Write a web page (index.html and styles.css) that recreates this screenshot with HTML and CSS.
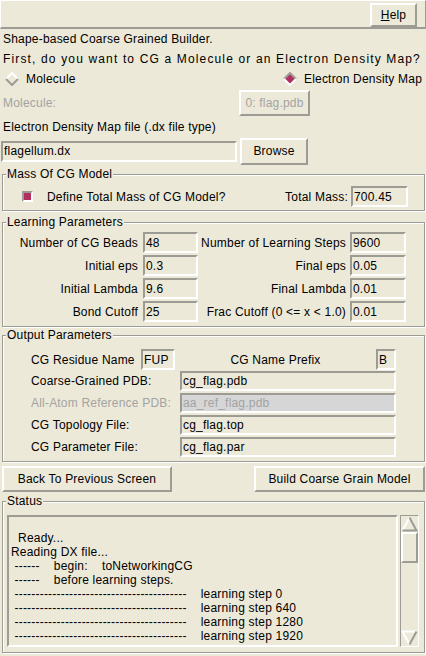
FILE: index.html
```html
<!DOCTYPE html>
<html>
<head>
<meta charset="utf-8">
<link rel="stylesheet" href="styles.css">
</head>
<body>
<div class="menubar"><div class="menubtn"><u>H</u>elp</div></div>
<div class="msg">Shape-based Coarse Grained Builder.</div>
<div class="msg wide">First, do you want to CG a Molecule or an Electron Density Map?</div>
<div class="radios">
  <div class="radio">
    <svg width="14" height="14" viewBox="0 0 14 14"><polygon points="7,1 13,7 7,13 1,7" fill="#ece9d8"/><polyline points="1,7 7,1 13,7" fill="none" stroke="#ffffff" stroke-width="2"/><polyline points="1,7 7,13 13,7" fill="none" stroke="#9c9b94" stroke-width="2"/></svg>
    <span>Molecule</span>
  </div>
  <div class="radio">
    <svg width="14" height="14" viewBox="0 0 14 14"><polygon points="7,1 13,7 7,13 1,7" fill="#b03060"/><polyline points="1,7 7,1 13,7" fill="none" stroke="#9c9b94" stroke-width="2"/><polyline points="1,7 7,13 13,7" fill="none" stroke="#ffffff" stroke-width="2"/></svg>
    <span>Electron Density Map</span>
  </div>
</div>
<div class="molrow">
  <span class="mollabel dis">Molecule:</span>
  <div class="btn molbtn dis">0: flag.pdb</div>
</div>
<div class="msg">Electron Density Map file (.dx file type)</div>
<div class="filerow">
  <div class="entry fileentry">flagellum.dx</div>
  <div class="btn browse">Browse</div>
</div>

<div class="group mass">
  <div class="legend">Mass Of CG Model</div>
  <div class="massrow">
    <div class="check"></div>
    <span class="checklabel">Define Total Mass of CG Model?</span>
    <span class="tm">Total Mass:</span>
    <div class="entry tmentry">700.45</div>
  </div>
</div>

<div class="group learn">
  <div class="legend">Learning Parameters</div>
  <div class="lgrid">
    <div class="lab">Number of CG Beads</div><div class="entry">48</div>
    <div class="lab r">Number of Learning Steps</div><div class="entry">9600</div>
    <div class="lab">Initial eps</div><div class="entry">0.3</div>
    <div class="lab r">Final eps</div><div class="entry">0.05</div>
    <div class="lab">Initial Lambda</div><div class="entry">9.6</div>
    <div class="lab r">Final Lambda</div><div class="entry">0.01</div>
    <div class="lab">Bond Cutoff</div><div class="entry">25</div>
    <div class="lab r">Frac Cutoff (0 &lt;= x &lt; 1.0)</div><div class="entry">0.01</div>
  </div>
</div>

<div class="group output">
  <div class="legend">Output Parameters</div>
  <div class="orow1">
    <span class="olab1">CG Residue Name</span>
    <div class="entry fup">FUP</div>
    <span class="prefix">CG Name Prefix</span>
    <div class="entry bent">B</div>
  </div>
  <div class="orow"><span class="olab">Coarse-Grained PDB:</span><div class="entry oent">cg_flag.pdb</div></div>
  <div class="orow"><span class="olab dis">All-Atom Reference PDB:</span><div class="entry oent disent">aa_ref_flag.pdb</div></div>
  <div class="orow"><span class="olab">CG Topology File:</span><div class="entry oent">cg_flag.top</div></div>
  <div class="orow"><span class="olab">CG Parameter File:</span><div class="entry oent">cg_flag.par</div></div>
</div>

<div class="btnrow">
  <div class="btn back">Back To Previous Screen</div>
  <div class="btn build">Build Coarse Grain Model</div>
</div>

<div class="group status">
  <div class="legend">Status</div>
  <div class="statusbody">
    <div class="text">
<div class="ln"> </div><div class="ln">  Ready...</div><div class="ln">Reading DX file...</div><div class="ln"> ------    begin:    toNetworkingCG</div><div class="ln"> ------    before learning steps.</div><div class="ln"> -----------------------------------------    learning step 0</div><div class="ln"> -----------------------------------------    learning step 640</div><div class="ln"> -----------------------------------------    learning step 1280</div><div class="ln"> -----------------------------------------    learning step 1920</div>
    </div>
    <div class="scroll">
      <svg class="arrow" width="17" height="16" viewBox="0 0 17 16"><polyline points="1.5,14.5 8.5,1.5" fill="none" stroke="#ffffff" stroke-width="2"/><polyline points="8.5,1.5 15.5,14.5 1.5,14.5" fill="none" stroke="#9c9b94" stroke-width="2"/></svg>
      <div class="slider"></div>
      <div class="trough"></div>
      <svg class="arrow" width="17" height="16" viewBox="0 0 17 16"><polyline points="15.5,1.5 1.5,1.5 8.5,14.5" fill="none" stroke="#ffffff" stroke-width="2"/><polyline points="8.5,14.5 15.5,1.5" fill="none" stroke="#9c9b94" stroke-width="2"/></svg>
    </div>
  </div>
</div>
</body>
</html>
```
FILE: styles.css
```css
* { box-sizing: border-box; }
html, body { margin: 0; padding: 0; }
body {
  width: 426px;
  height: 656px;
  background: #ece9d8;
  font-family: "Liberation Sans", Arial, sans-serif;
  font-size: 12px;
  letter-spacing: 0.2px;
  color: #000;
  overflow: hidden;
}
.dis { color: #a3a3a3; }

.menubar {
  height: 29px;
  border-top: 1px solid #fff;
  border-left: 1px solid #fff;
  border-bottom: 2px solid #9c9b94;
  border-right: 1px solid #9c9b94;
  display: flex;
  justify-content: flex-end;
  padding: 2px 8px 0 0;
}
.menubtn {
  width: 47px;
  border: 2px solid;
  border-color: #fff #9c9b94 #9c9b94 #fff;
  display: flex;
  align-items: center;
  justify-content: center;
}

.msg {
  height: 20px;
  line-height: 20px;
  padding-left: 3px;
  white-space: nowrap;
}
.msg:first-of-type { margin-top: 1px; }
.msg.wide { letter-spacing: 1.15px; }

.radios {
  height: 20px;
  display: flex;
  align-items: center;
  justify-content: space-between;
  padding: 0 4px 0 5px;
}
.radio { display: flex; align-items: center; gap: 7px; }
.radio svg { display: block; }

.btn {
  border: 2px solid;
  border-color: #fff #9c9b94 #9c9b94 #fff;
  display: flex;
  align-items: center;
  justify-content: center;
  white-space: nowrap;
}
.entry {
  border: 2px solid;
  border-color: #9c9b94 #fff #fff #9c9b94;
  display: flex;
  align-items: center;
  padding-left: 1px;
  white-space: nowrap;
  overflow: hidden;
}

.molrow {
  height: 28px;
  display: flex;
  align-items: center;
}
.mollabel { width: 239px; padding-left: 3px; }
.molbtn { width: 71px; height: 26px; }

.filerow {
  height: 28px;
  display: flex;
  align-items: center;
  padding-left: 1px;
}
.fileentry { width: 236px; height: 21px; }
.browse { width: 68px; height: 27px; margin-left: 3px; }

.group {
  position: relative;
  margin: 0 1px 0 2px;
  border: 1px solid #9c9b94;
  box-shadow: inset 1px 1px 0 #fff, 1px 1px 0 #fff;
}
.legend {
  position: absolute;
  top: -8px;
  left: 3px;
  padding: 0 1px;
  line-height: 14px;
  background: #ece9d8;
  white-space: nowrap;
}

.mass { margin-top: 9px; padding: 11px 16px 3px 19px; }
.massrow { height: 21px; display: flex; align-items: center; }
.check {
  width: 11px;
  height: 11px;
  border: 2px solid;
  border-color: #9c9b94 #fff #fff #9c9b94;
  background: #b03060;
}
.checklabel { margin-left: 14px; }
.tm { margin-left: auto; margin-right: 3px; }
.tmentry { width: 57px; height: 21px; }

.learn { margin-top: 11px; padding: 9px 0 4px 0; }
.lgrid {
  display: grid;
  grid-template-columns: 140px 55px 152px 56px;
  grid-auto-rows: 21px;
  row-gap: 2px;
}
.lab {
  display: flex;
  align-items: center;
  justify-content: flex-end;
  padding-right: 5px;
  white-space: nowrap;
}
.lab.r { padding-right: 4px; }

.output { margin-top: 8px; padding: 13px 0 4px 28px; }
.orow1 { height: 21px; display: flex; align-items: center; }
.olab1 { width: 110px; }
.fup { width: 34px; height: 21px; }
.prefix { width: 201px; text-align: center; }
.bent { width: 20px; height: 21px; }
.orow { height: 20px; display: flex; align-items: center; margin-top: 2px; }
.orow1 + .orow { margin-top: 1px; }
.olab { width: 149px; white-space: nowrap; }
.oent { width: 216px; height: 20px; }
.disent { background: #d6d6d6; color: #a3a3a3; }

.btnrow {
  display: flex;
  justify-content: space-between;
  margin: 4px 1px 0 2px;
}
.back { width: 170px; height: 26px; }
.build { width: 171px; height: 26px; }

.status { margin-top: 9px; padding: 13px 5px 5px 4px; }
.statusbody { display: flex; gap: 2px; height: 132px; }
.text {
  flex: 1;
  border: 2px solid;
  border-color: #9c9b94 #fff #fff #9c9b94;
  padding-left: 2px;
  overflow: hidden;
}
.ln { height: 14px; line-height: 14px; white-space: pre; }
.scroll {
  width: 19px;
  border: 1px solid;
  border-color: #9c9b94 #fff #fff #9c9b94;
  display: flex;
  flex-direction: column;
}
.arrow { display: block; }
.slider {
  height: 31px;
  border: 2px solid;
  border-color: #fff #9c9b94 #9c9b94 #fff;
}
.trough { flex: 1; }
```
